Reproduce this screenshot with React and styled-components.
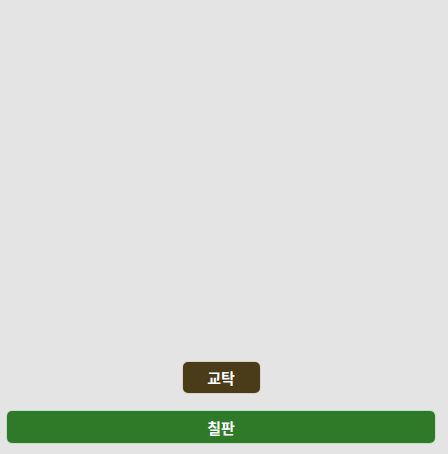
import React from "react";
import styled, { createGlobalStyle } from "styled-components";

const GlobalStyle = createGlobalStyle`
  html, body {
    margin: 0;
    padding: 0;
    background: #e4e4e4;
    font-family: "Noto Sans CJK KR", "Noto Sans", sans-serif;
  }
`;

const Room = styled.div`
  height: 100vh;
  box-sizing: border-box;
  display: flex;
  flex-direction: column;
  padding: 0 13px 11px 7px;
`;

const Floor = styled.div`
  flex: 1;
`;

const Front = styled.div`
  display: flex;
  flex-direction: column;
  align-items: center;
  gap: 18px;
`;

const Label = styled.div`
  box-sizing: border-box;
  display: flex;
  align-items: center;
  justify-content: center;
  color: #fff;
  font-weight: 700;
  font-size: 15px;
  border-radius: 5px;
  width: ${(p) => (p.$wide ? "100%" : "77px")};
  height: ${(p) => (p.$wide ? "32px" : "31px")};
  background: ${(p) => p.$bg};
  box-shadow: 0 0 0 1px ${(p) => p.$edge};
`;

export default function App() {
  return (
    <>
      <GlobalStyle />
      <Room>
        <Floor />
        <Front>
          <Label $bg="#4a3c18" $edge="#d8d4c8">교탁</Label>
          <Label $wide $bg="#2e7a29" $edge="#c9dcc5">칠판</Label>
        </Front>
      </Room>
    </>
  );
}
